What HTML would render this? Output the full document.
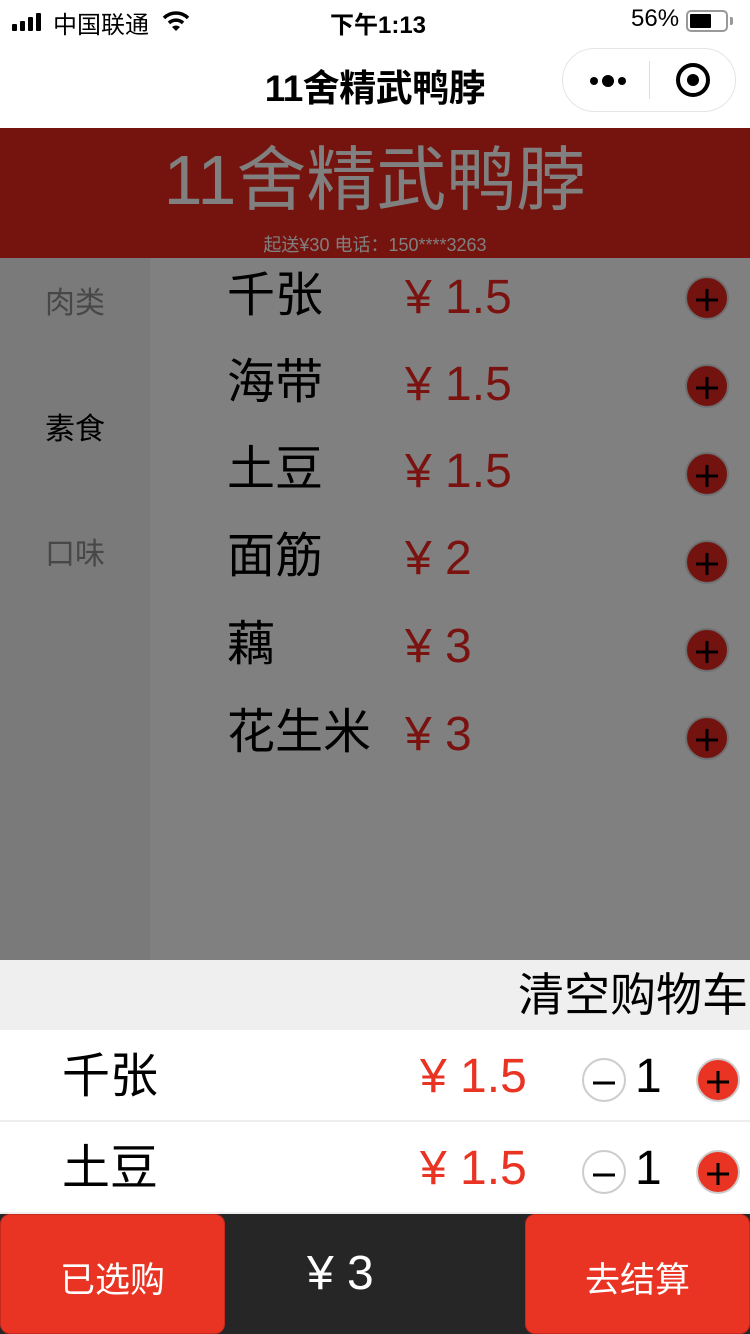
<!DOCTYPE html>
<html><head><meta charset="utf-8"><style>
*{margin:0;padding:0;box-sizing:border-box}
body{width:750px;height:1334px;overflow:hidden;position:relative;background:#fff;font-family:"Liberation Sans","Noto Sans CJK SC",sans-serif}
.a{position:absolute;white-space:nowrap}
.plus{position:absolute;width:44px;height:44px;border-radius:50%;background:#73130f;border:2px solid #6e6e6e}
.plus:before,.plus:after{content:"";position:absolute;background:#000;left:50%;top:56%;transform:translate(-50%,-50%)}
.plus:before{width:22px;height:3px}.plus:after{width:3px;height:22px}
.name{position:absolute;left:227px;font-size:48px;color:#000;line-height:1}
.price{position:absolute;left:405px;font-size:48px;color:#7a130f;line-height:1}
.cp{position:absolute;width:44px;height:44px;border-radius:50%;background:#e93323;border:2px solid #ccc}
.cp:before,.cp:after{content:"";position:absolute;background:#000;left:50%;top:56%;transform:translate(-50%,-50%)}
.cp:before{width:22px;height:3px}.cp:after{width:3px;height:22px}
.cm{position:absolute;width:44px;height:44px;border-radius:50%;background:#fff;border:2px solid #ccc}
.cm:before{content:"";position:absolute;background:#000;width:22px;height:3px;left:50%;top:58%;transform:translate(-50%,-50%)}
</style></head><body>
<!-- status bar -->
<div class="a" style="left:12px;top:13px;display:flex;align-items:flex-end;gap:3px">
<div style="width:5px;height:7px;background:#000;border-radius:1px"></div><div style="width:5px;height:10px;background:#000;border-radius:1px"></div><div style="width:5px;height:14px;background:#000;border-radius:1px"></div><div style="width:5px;height:18px;background:#000;border-radius:1px"></div></div>
<div class="a" style="left:53px;top:5px;font-size:24px">中国联通</div>
<svg class="a" style="left:162px;top:10px" width="28" height="22" viewBox="0 0 28 22"><path d="M2 8a17 17 0 0 1 24 0" stroke="#000" stroke-width="3.5" fill="none"/><path d="M7 13a10 10 0 0 1 14 0" stroke="#000" stroke-width="3.5" fill="none"/><path d="M10 17l4 4 4-4a6 6 0 0 0-8 0z" fill="#000"/></svg>
<div class="a" style="left:330px;top:5px;font-size:24px;font-weight:bold">下午1:13</div>
<div class="a" style="left:631px;top:5px;font-size:24px">56%</div>
<div class="a" style="left:686px;top:10px;width:42px;height:22px;border:2px solid #999;border-radius:5px"><div style="position:absolute;left:2px;top:2px;width:21px;height:14px;background:#000;border-radius:1px"></div></div>
<div class="a" style="left:730px;top:17px;width:3px;height:8px;background:#999;border-radius:0 2px 2px 0"></div>
<!-- nav -->
<div class="a" style="left:0;width:750px;top:58px;text-align:center;font-size:37px;font-weight:bold;letter-spacing:-0.5px">11舍精武鸭脖</div>
<div class="a" style="left:562px;top:48px;width:174px;height:64px;border:1px solid #e5e5e5;border-radius:32px;background:#fff">
<div style="position:absolute;left:27px;top:28px;width:8px;height:8px;border-radius:50%;background:#000"></div>
<div style="position:absolute;left:39px;top:26px;width:12px;height:12px;border-radius:50%;background:#000"></div>
<div style="position:absolute;left:55px;top:28px;width:8px;height:8px;border-radius:50%;background:#000"></div>
<div style="position:absolute;left:86px;top:12px;width:1px;height:38px;background:#ddd"></div>
<div style="position:absolute;left:113px;top:14px;width:34px;height:34px;border-radius:50%;border:4px solid #000"></div>
<div style="position:absolute;left:124px;top:25px;width:12px;height:12px;border-radius:50%;background:#000"></div>
</div>
<!-- banner -->
<div class="a" style="left:0;top:128px;width:750px;height:130px;background:#75140f"></div>
<div class="a" style="left:0;width:750px;top:140px;text-align:center;font-size:70px;color:#808080;line-height:80px">11舍精武鸭脖</div>
<div class="a" style="left:0;width:750px;top:231px;text-align:center;font-size:18px;color:#808080">起送¥30 电话：150****3263</div>
<!-- sidebar/content -->
<div class="a" style="left:0;top:258px;width:150px;height:702px;background:#7a7a7a"></div>
<div class="a" style="left:150px;top:258px;width:600px;height:702px;background:#808080"></div>
<div class="a" style="left:45px;top:278px;font-size:30px;color:#474747">肉类</div>
<div class="a" style="left:45px;top:404px;font-size:30px;color:#000">素食</div>
<div class="a" style="left:45px;top:529px;font-size:30px;color:#474747">口味</div>
<div class="name" style="top:272px">千张</div><div class="price" style="top:274px">¥ 1.5</div><div class="plus" style="left:685px;top:276px"></div>
<div class="name" style="top:359px">海带</div><div class="price" style="top:361px">¥ 1.5</div><div class="plus" style="left:685px;top:364px"></div>
<div class="name" style="top:446px">土豆</div><div class="price" style="top:448px">¥ 1.5</div><div class="plus" style="left:685px;top:452px"></div>
<div class="name" style="top:533px">面筋</div><div class="price" style="top:535px">¥ 2</div><div class="plus" style="left:685px;top:540px"></div>
<div class="name" style="top:621px">藕</div><div class="price" style="top:623px">¥ 3</div><div class="plus" style="left:685px;top:628px"></div>
<div class="name" style="top:709px">花生米</div><div class="price" style="top:711px">¥ 3</div><div class="plus" style="left:685px;top:716px"></div>
<!-- cart -->
<div class="a" style="left:0;top:960px;width:750px;height:70px;background:#efefef"></div>
<div class="a" style="right:2px;top:970px;font-size:46px;line-height:1.1">清空购物车</div>
<div class="a" style="left:0;top:1120px;width:750px;height:2px;background:#eee"></div>
<div class="a" style="left:62px;top:1053px;font-size:48px;line-height:1">千张</div>
<div class="a" style="left:420px;top:1053px;font-size:48px;line-height:1;color:#e93323">¥ 1.5</div>
<div class="cm" style="left:582px;top:1058px"></div>
<div class="a" style="left:635px;top:1053px;font-size:48px;line-height:1">1</div>
<div class="cp" style="left:696px;top:1058px"></div>
<div class="a" style="left:62px;top:1145px;font-size:48px;line-height:1">土豆</div>
<div class="a" style="left:420px;top:1145px;font-size:48px;line-height:1;color:#e93323">¥ 1.5</div>
<div class="cm" style="left:582px;top:1150px"></div>
<div class="a" style="left:635px;top:1145px;font-size:48px;line-height:1">1</div>
<div class="cp" style="left:696px;top:1150px"></div>
<div class="a" style="left:0;top:1212px;width:750px;height:2px;background:#eee"></div>
<!-- bottom -->
<div class="a" style="left:0;top:1214px;width:750px;height:120px;background:#262626"></div>
<div class="a" style="left:0;top:1214px;width:225px;height:120px;background:#e93323;border-radius:10px;border:1px solid #c52a1d"></div>
<div class="a" style="left:0;width:225px;top:1252px;text-align:center;font-size:35px;color:#fff">已选购</div>
<div class="a" style="left:307px;top:1246px;font-size:48px;color:#fff">¥ 3</div>
<div class="a" style="left:525px;top:1214px;width:225px;height:120px;background:#e93323;border-radius:10px;border:1px solid #c52a1d"></div>
<div class="a" style="left:525px;width:225px;top:1252px;text-align:center;font-size:35px;color:#fff">去结算</div>
</body></html>
